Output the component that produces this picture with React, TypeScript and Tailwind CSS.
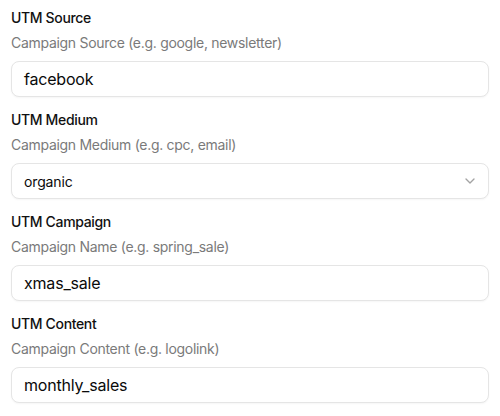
import React from "react";

const font = { fontFamily: "Inter, 'Noto Sans', sans-serif" };

function Group({ label, desc, children }: { label: string; desc: string; children: React.ReactNode }) {
  return (
    <div className="flex flex-col">
      <div className="text-[14px] leading-[20px] font-medium text-[#111111] tracking-[-0.025em]">{label}</div>
      <div className="mt-[5px] text-[14px] leading-[20px] text-[#7a7a7a] tracking-[-0.021em]">{desc}</div>
      <div className="mt-[8px]">{children}</div>
    </div>
  );
}

function Input({ value }: { value: string }) {
  return (
    <div className="h-[36px] w-full rounded-[8px] border border-[#e5e5e5] bg-white px-[12px] flex items-center shadow-[0_1px_2px_rgba(0,0,0,0.04)]">
      <span className="text-[16px] text-[#0a0a0a] tracking-[-0.012em]">{value}</span>
    </div>
  );
}

function Select({ value }: { value: string }) {
  return (
    <div className="h-[36px] w-full rounded-[8px] border border-[#e5e5e5] bg-white pl-[12px] pr-[10px] flex items-center justify-between shadow-[0_1px_2px_rgba(0,0,0,0.04)]">
      <span className="text-[14px] text-[#0a0a0a] tracking-[-0.01em]">{value}</span>
      <svg width="16" height="16" viewBox="0 0 24 24" fill="none" stroke="#a3a3a3" strokeWidth="2" strokeLinecap="round" strokeLinejoin="round">
        <path d="m6 9 6 6 6-6" />
      </svg>
    </div>
  );
}

export default function App() {
  return (
    <div className="w-[500px] h-[416px] bg-white overflow-hidden" style={font}>
      <div className="px-[11px] pt-[8px] flex flex-col gap-[13px]">
        <Group label="UTM Source" desc="Campaign Source (e.g. google, newsletter)">
          <Input value="facebook" />
        </Group>
        <Group label="UTM Medium" desc="Campaign Medium (e.g. cpc, email)">
          <Select value="organic" />
        </Group>
        <Group label="UTM Campaign" desc="Campaign Name (e.g. spring_sale)">
          <Input value="xmas_sale" />
        </Group>
        <Group label="UTM Content" desc="Campaign Content (e.g. logolink)">
          <Input value="monthly_sales" />
        </Group>
      </div>
    </div>
  );
}
